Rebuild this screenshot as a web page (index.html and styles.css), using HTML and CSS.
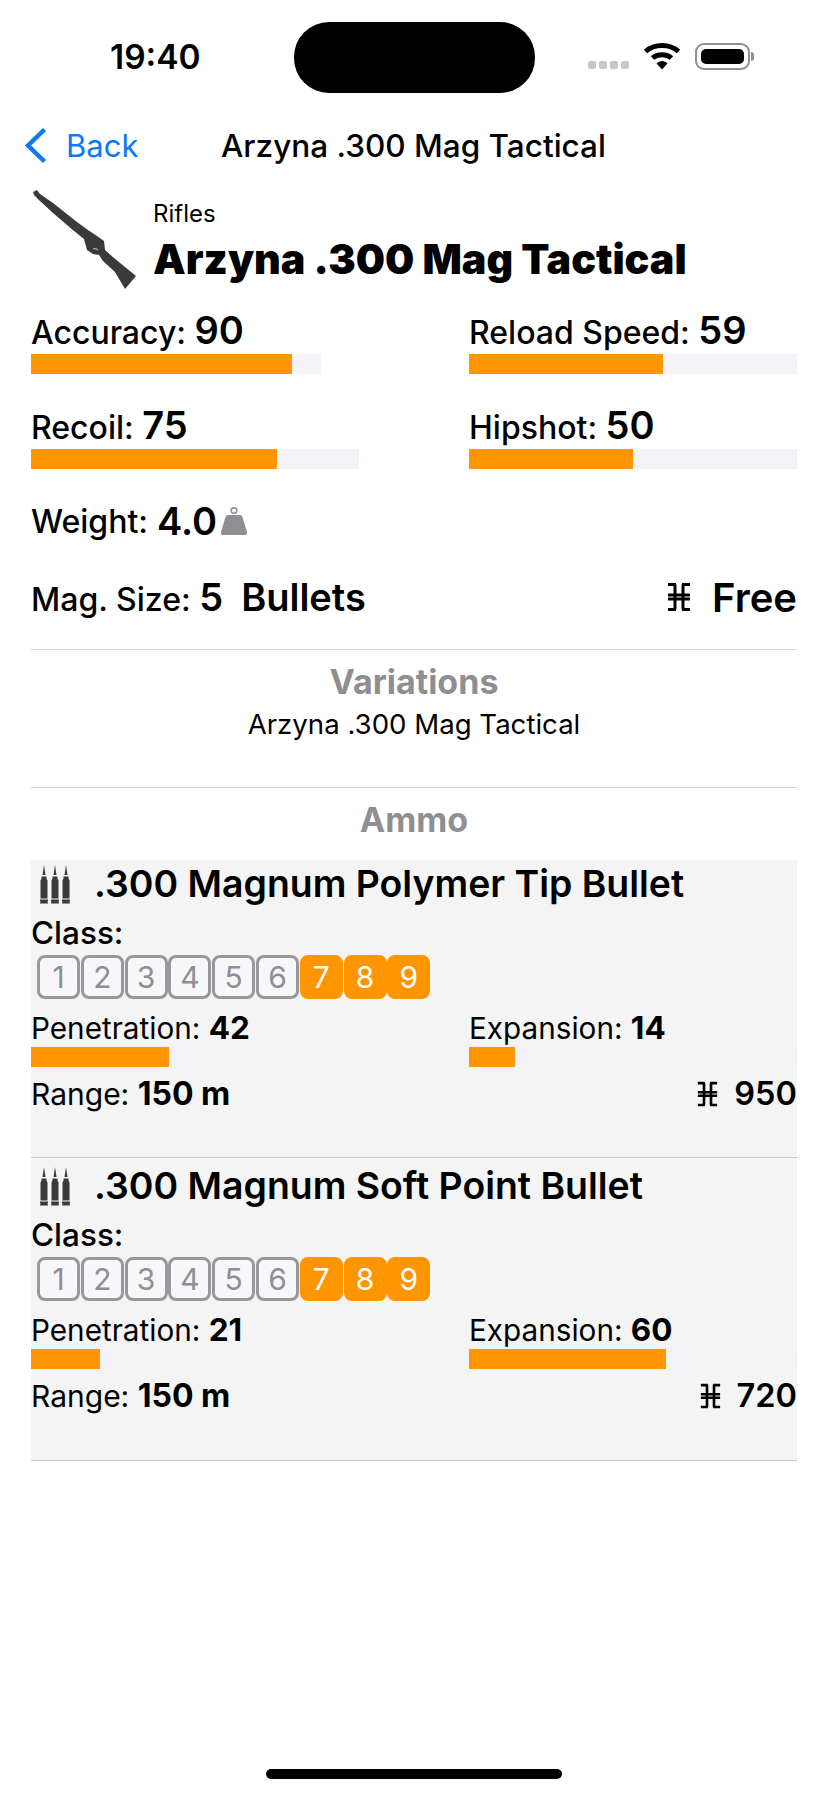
FILE: index.html
```html
<!DOCTYPE html>
<html lang="en">
<head>
  <meta charset="UTF-8" />
  <title>Arzyna .300 Mag Tactical</title>
  <link rel="stylesheet" href="styles.css">
</head>
<body>
  <svg width="0" height="0" class="defs">
    <symbol id="coin" viewBox="0 0 24 28">
      <path d="M1 1.500h8M15 1.500h8M1 26.500h8M15 26.500h8M1 12h22M1 16h22M8 1.500v25M16 1.500v25" fill="none" stroke="currentColor" stroke-width="3"/>
    </symbol>
    <symbol id="bullets" viewBox="0 0 32 40">
      <g id="b" fill="#3a3a3c">
        <path d="M3.500 11 5 1l1.500 10z"/>
        <path d="M2.500 12.500h5v2l1 2v18h-7v-18l1-2z"/>
        <path d="M1 35.500h8v1.500H8.500l.5 2.500H1l.5-2.500H1z"/>
      </g>
      <use href="#b" x="11"/>
      <use href="#b" x="22"/>
    </symbol>
  </svg>

  <div class="status-bar">
    <span class="time">19:40</span>
    <div class="island"></div>
    <div class="status-icons">
      <div class="signal"><i></i><i></i><i></i><i></i></div>
      <svg class="wifi" width="38" height="28" viewBox="0 0 38 28">
        <path d="M2.500 9.500C11.500 1.500 26.500 1.500 35.500 9.500" fill="none" stroke="#000" stroke-width="5"/>
        <path d="M9.500 16C14.500 11.500 23.500 11.500 28.500 16" fill="none" stroke="#000" stroke-width="5"/>
        <path d="M13.500 21.500C16.500 18 21.500 18 24.500 21.500L19 27.500z"/>
      </svg>
      <div class="battery"><div class="battery-level"></div></div>
      <div class="battery-tip"></div>
    </div>
  </div>

  <div class="nav">
    <div class="back">
      <svg width="24" height="37" viewBox="0 0 24 37"><path d="M20.500 2.500 4 18.500l16.500 16" fill="none" stroke="#0a7bf0" stroke-width="4.500"/></svg>
      <span>Back</span>
    </div>
    <div class="nav-title">Arzyna .300 Mag Tactical</div>
  </div>

  <main class="content">
    <div class="head">
      <svg class="rifle" width="110" height="104" viewBox="12 8 110 104">
        <path fill="#3a3a3c" d="M13 12 17 10 20 14 33 23 57 42 68 50 77 56 84 61 85 70 94 78 116 96 105 109 95 92 83 81 79 75 73 74 67 70 64 59 54 51 33 33 20 21 14 15z"/>
        <path d="M73 69q3-1 5 1" fill="none" stroke="#b5b5b8" stroke-width="1.200"/>
      </svg>
      <div class="head-text">
        <div class="category">Rifles</div>
        <h1>Arzyna .300 Mag Tactical</h1>
      </div>
    </div>

    <div class="stats">
      <div class="stat">
        <div class="stat-label">Accuracy: <b>90</b></div>
        <div class="track track-short"><div class="fill" style="width:90%"></div></div>
      </div>
      <div class="stat">
        <div class="stat-label">Reload Speed: <b>59</b></div>
        <div class="track"><div class="fill" style="width:59%"></div></div>
      </div>
      <div class="stat">
        <div class="stat-label">Recoil: <b>75</b></div>
        <div class="track"><div class="fill" style="width:75%"></div></div>
      </div>
      <div class="stat">
        <div class="stat-label">Hipshot: <b>50</b></div>
        <div class="track"><div class="fill" style="width:50%"></div></div>
      </div>
    </div>

    <div class="weight">
      Weight: <b>4.0</b>
      <svg class="kettle" width="28" height="30" viewBox="0 0 28 30">
        <circle cx="14" cy="4.500" r="2.800" fill="none" stroke="#8e8e93" stroke-width="1.600"/>
        <path fill="#8e8e93" d="M8 9h12q2 0 2.500 2L27 26q.5 3-2 3H3q-2.500 0-2-3L5.500 11Q6 9 8 9z"/>
      </svg>
    </div>

    <div class="mag">
      <div class="mag-size">Mag. Size: <b>5</b><b class="bullets-word">Bullets</b></div>
      <div class="price-big"><svg width="24" height="28"><use href="#coin"/></svg><b>Free</b></div>
    </div>

    <section class="variations">
      <h2>Variations</h2>
      <div class="variation">Arzyna .300 Mag Tactical</div>
    </section>

    <section class="ammo">
      <h2>Ammo</h2>

      <div class="card">
        <div class="card-title"><svg width="32" height="40"><use href="#bullets"/></svg>.300 Magnum Polymer Tip Bullet</div>
        <div class="class-label">Class:</div>
        <div class="classes">
          <span>1</span><span>2</span><span>3</span><span>4</span><span>5</span><span>6</span>
          <span class="on">7</span><span class="on">8</span><span class="on">9</span>
        </div>
        <div class="ballistics">
          <div>
            <div class="small-label">Penetration: <b>42</b></div>
            <div class="track"><div class="fill" style="width:42%"></div></div>
          </div>
          <div>
            <div class="small-label">Expansion: <b>14</b></div>
            <div class="track"><div class="fill" style="width:14%"></div></div>
          </div>
        </div>
        <div class="card-foot">
          <div class="small-label">Range: <b>150 m</b></div>
          <div class="price"><svg width="21" height="26"><use href="#coin"/></svg><b>950</b></div>
        </div>
      </div>

      <div class="card card-next">
        <div class="card-title"><svg width="32" height="40"><use href="#bullets"/></svg>.300 Magnum Soft Point Bullet</div>
        <div class="class-label">Class:</div>
        <div class="classes">
          <span>1</span><span>2</span><span>3</span><span>4</span><span>5</span><span>6</span>
          <span class="on">7</span><span class="on">8</span><span class="on">9</span>
        </div>
        <div class="ballistics">
          <div>
            <div class="small-label">Penetration: <b>21</b></div>
            <div class="track"><div class="fill" style="width:21%"></div></div>
          </div>
          <div>
            <div class="small-label">Expansion: <b>60</b></div>
            <div class="track"><div class="fill" style="width:60%"></div></div>
          </div>
        </div>
        <div class="card-foot">
          <div class="small-label">Range: <b>150 m</b></div>
          <div class="price"><svg width="21" height="26"><use href="#coin"/></svg><b>720</b></div>
        </div>
      </div>
    </section>
  </main>

  <div class="home-indicator"></div>
</body>
</html>
```

FILE: styles.css
```css
* {
  box-sizing: border-box;
}

body {
  margin: 0;
  width: 828px;
  height: 1795px;
  position: relative;
  overflow: hidden;
  background: #fff;
  color: #000;
  font-family: "Inter", "Liberation Sans", sans-serif;
}

b {
  font-weight: 700;
}

.defs {
  position: absolute;
}

.status-bar {
  height: 114px;
  padding: 22px 0 0 110px;
  display: flex;
  align-items: flex-start;
}

.time {
  width: 184px;
  margin-top: 16px;
  font-size: 33.500px;
  line-height: 38px;
  font-weight: 600;
}

.island {
  width: 241px;
  height: 71px;
  border-radius: 35px;
  background: #000;
}

.status-icons {
  margin: 20px 0 0 53px;
  display: flex;
  align-items: center;
}

.signal {
  display: flex;
  gap: 3px;
  margin: 17px 14px 0 0;
}

.signal i {
  width: 8px;
  height: 8px;
  border-radius: 2px;
  background: #c7c7c9;
}

.wifi {
  margin-right: 14px;
}

.battery {
  width: 55px;
  height: 27px;
  padding: 4px;
  border: 2.500px solid #8e8e93;
  border-radius: 9px;
}

.battery-level {
  width: 100%;
  height: 100%;
  border-radius: 5px;
  background: #000;
}

.battery-tip {
  width: 3px;
  height: 9px;
  margin-left: 1px;
  border-radius: 0 3px 3px 0;
  background: #8e8e93;
}

.nav {
  height: 62px;
  padding-left: 24px;
  display: flex;
  align-items: center;
}

.back {
  width: 197px;
  display: flex;
  align-items: center;
  gap: 18px;
  color: #0a7bf0;
  font-size: 31px;
}

.nav-title {
  font-size: 31.500px;
  font-weight: 500;
  white-space: nowrap;
}

.content {
  padding: 0 31px;
}

.head {
  height: 120px;
  margin-top: 12px;
  display: flex;
  align-items: flex-start;
}

.rifle {
  flex: none;
  margin-left: 1px;
}

.head-text {
  margin: 12px 0 0 11px;
}

.category {
  font-size: 24px;
  line-height: 28px;
}

h1 {
  margin: 6px 0 0;
  font-size: 41.200px;
  line-height: 50px;
  font-weight: 900;
  white-space: nowrap;
}

.stats {
  margin-top: 4px;
  display: grid;
  grid-template-columns: 438px 328px;
  row-gap: 33px;
}

.stat-label {
  margin-bottom: 3px;
  font-size: 32px;
  line-height: 36px;
  font-weight: 500;
  white-space: nowrap;
}

.stat-label b {
  font-size: 38px;
  font-weight: 600;
}

.track {
  width: 328px;
  height: 20px;
  background: #f2f2f7;
}

.track-short {
  width: 290px;
}

.fill {
  height: 100%;
  background: #ff9500;
}

.weight {
  margin-top: 30px;
  height: 44px;
  display: flex;
  align-items: center;
  gap: 9px;
  font-size: 32px;
  font-weight: 500;
}

.weight b {
  font-size: 38px;
  font-weight: 600;
}

.kettle {
  margin-left: -6px;
}

.mag {
  margin-top: 32px;
  display: flex;
  justify-content: space-between;
  align-items: center;
  height: 44px;
}

.mag-size {
  font-size: 32px;
  font-weight: 500;
}

.mag-size b {
  font-size: 38px;
  font-weight: 600;
}

.mag-size .bullets-word {
  margin-left: 18px;
}

.price-big {
  display: flex;
  align-items: center;
  gap: 21px;
}

.price-big b {
  font-size: 40px;
  font-weight: 600;
}

.variations {
  margin-top: 30px;
  height: 138px;
  border-top: 1px solid #d1d1d6;
  text-align: center;
}

h2 {
  margin: 0;
  padding-top: 13px;
  font-size: 34px;
  line-height: 38px;
  font-weight: 700;
  color: #8e8e93;
}

.variation {
  font-size: 27.600px;
  line-height: 36px;
  margin-top: 5px;
}

.ammo {
  border-top: 1px solid #d1d1d6;
}

.ammo h2 {
  text-align: center;
  height: 72px;
}

.card {
  height: 298px;
  background: #f4f4f5;
  border-bottom: 1px solid #c9c9cc;
}

.card-next {
  height: 303px;
  padding-top: 4px;
}

.card-title {
  display: flex;
  align-items: center;
  gap: 23px;
  height: 50px;
  padding: 0 0 3px 8px;
  font-size: 37.400px;
  font-weight: 600;
  white-space: nowrap;
}

.class-label {
  margin-top: 5px;
  font-size: 31.500px;
  line-height: 36px;
  font-weight: 500;
}

.classes {
  margin: 4px 0 0 6px;
  display: flex;
  gap: 0.800px;
}

.classes span {
  width: 43px;
  height: 44px;
  border: 3.500px solid #98989c;
  border-radius: 8px;
  background: #f7f7f9;
  color: #8e8e93;
  font-size: 30px;
  display: flex;
  align-items: center;
  justify-content: center;
}

.classes .on {
  border-color: #ff9500;
  background: #ff9500;
  color: #fff;
}

.ballistics {
  margin-top: 11px;
  display: grid;
  grid-template-columns: 438px 328px;
}

.small-label {
  font-size: 30px;
  line-height: 36px;
  white-space: nowrap;
}

.small-label b {
  font-size: 32px;
}

.ballistics .small-label {
  margin-bottom: 1px;
  font-size: 29.700px;
}

.ballistics .small-label b {
  font-size: 31.500px;
}

.card-foot {
  margin-top: 7px;
  display: flex;
  justify-content: space-between;
  align-items: center;
}

.price {
  display: flex;
  align-items: center;
  gap: 16px;
  font-size: 32.500px;
}

.price b {
  font-weight: 600;
}

.home-indicator {
  position: absolute;
  left: 266px;
  top: 1769px;
  width: 296px;
  height: 10px;
  border-radius: 5px;
  background: #000;
}
```
